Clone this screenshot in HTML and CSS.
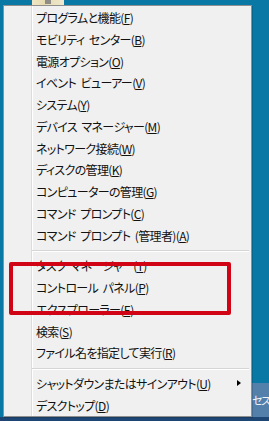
FILE: index.html
```html
<!DOCTYPE html>
<html lang="ja">
<head>
<meta charset="utf-8">
<link rel="stylesheet" href="styles.css">
</head>
<body>
<div class="desktop">
  <div class="tile-peek"><span class="tile-mark"></span></div>
  <div class="tile-side">セス</div>
  <div class="menu">
    <ul class="group">
      <li class="item">プログラムと機能(<u>F</u>)</li>
      <li class="item">モビリティ センター(<u>B</u>)</li>
      <li class="item">電源オプション(<u>O</u>)</li>
      <li class="item">イベント ビューアー(<u>V</u>)</li>
      <li class="item">システム(<u>Y</u>)</li>
      <li class="item">デバイス マネージャー(<u>M</u>)</li>
      <li class="item">ネットワーク接続(<u>W</u>)</li>
      <li class="item">ディスクの管理(<u>K</u>)</li>
      <li class="item">コンピューターの管理(<u>G</u>)</li>
      <li class="item">コマンド プロンプト(<u>C</u>)</li>
      <li class="item">コマンド プロンプト (管理者)(<u>A</u>)</li>
    </ul>
    <div class="sep"></div>
    <ul class="group">
      <li class="item">タスク マネージャー(<u>T</u>)</li>
      <li class="item">コントロール パネル(<u>P</u>)</li>
      <li class="item">エクスプローラー(<u>E</u>)</li>
      <li class="item">検索(<u>S</u>)</li>
      <li class="item">ファイル名を指定して実行(<u>R</u>)</li>
    </ul>
    <div class="sep"></div>
    <ul class="group">
      <li class="item has-sub">シャットダウンまたはサインアウト(<u>U</u>)<span class="arrow"></span></li>
      <li class="item">デスクトップ(<u>D</u>)</li>
    </ul>
  </div>
  <div class="highlight"></div>
</div>
</body>
</html>
```

FILE: styles.css
```css
html, body {
  margin: 0;
  padding: 0;
}

body {
  width: 269px;
  height: 421px;
  overflow: hidden;
  background: #0a78a5;
}

.desktop {
  position: relative;
  width: 269px;
  height: 421px;
  padding: 5px 0 0 3px;
  box-sizing: border-box;
  background: linear-gradient(to bottom, #0a78a5 0, #0a78a5 417px, #1d4674 417px);
  font-family: "Noto Sans CJK JP", "Noto Sans", sans-serif;
}

.tile-peek {
  position: absolute;
  left: 32px;
  top: 0;
  width: 32px;
  height: 5px;
  background: linear-gradient(to right, #efe6c4, #e6dbb0 40%, #efe8cf);
}

.tile-mark {
  position: absolute;
  left: 13px;
  top: 0;
  width: 6px;
  height: 4px;
  background: #8e8c86;
}

.tile-side {
  position: absolute;
  left: 251px;
  top: 383px;
  width: 18px;
  height: 34px;
  background: #537fab;
  color: #f2f5f8;
  font-size: 11px;
  line-height: 34px;
  padding-left: 1px;
  letter-spacing: -1.5px;
  font-feature-settings: "palt";
  white-space: nowrap;
  overflow: hidden;
}

.menu {
  position: relative;
  width: 249px;
  height: 412px;
  box-sizing: border-box;
  border: 1px solid #8f8f8f;
  padding: 1px 0 0 0;
  background-color: #f0f0f0;
  background-image: linear-gradient(to right, transparent 27px, #dcdcdc 27px, #dcdcdc 28px, #ffffff 28px, #ffffff 29px, transparent 29px);
  box-shadow: 1px 1px 0 rgba(0, 0, 0, 0.15);
}

.group {
  list-style: none;
  margin: 0;
  padding: 0;
}

.item {
  position: relative;
  height: 21.75px;
  line-height: 21.75px;
  padding-left: 32px;
  font-size: 12px;
  color: #111;
  white-space: nowrap;
  font-feature-settings: "palt";
  letter-spacing: -0.65px;
  word-spacing: 2.5px;
}

.item u {
  text-decoration: underline;
  text-underline-offset: 1px;
}

.arrow {
  position: absolute;
  right: 10px;
  top: 7px;
  width: 0;
  height: 0;
  border-top: 3.5px solid transparent;
  border-bottom: 3.5px solid transparent;
  border-left: 4px solid #000;
}

.sep {
  height: 9px;
  margin: 0 2px 0 28px;
  background: linear-gradient(to bottom, transparent 4px, #d5d5d5 4px, #d5d5d5 5px, #ffffff 5px, #ffffff 6px, transparent 6px);
}

.highlight {
  position: absolute;
  left: 9px;
  top: 262px;
  width: 222px;
  height: 53px;
  box-sizing: border-box;
  border: 4px solid #d00414;
  border-radius: 2px;
}
```
